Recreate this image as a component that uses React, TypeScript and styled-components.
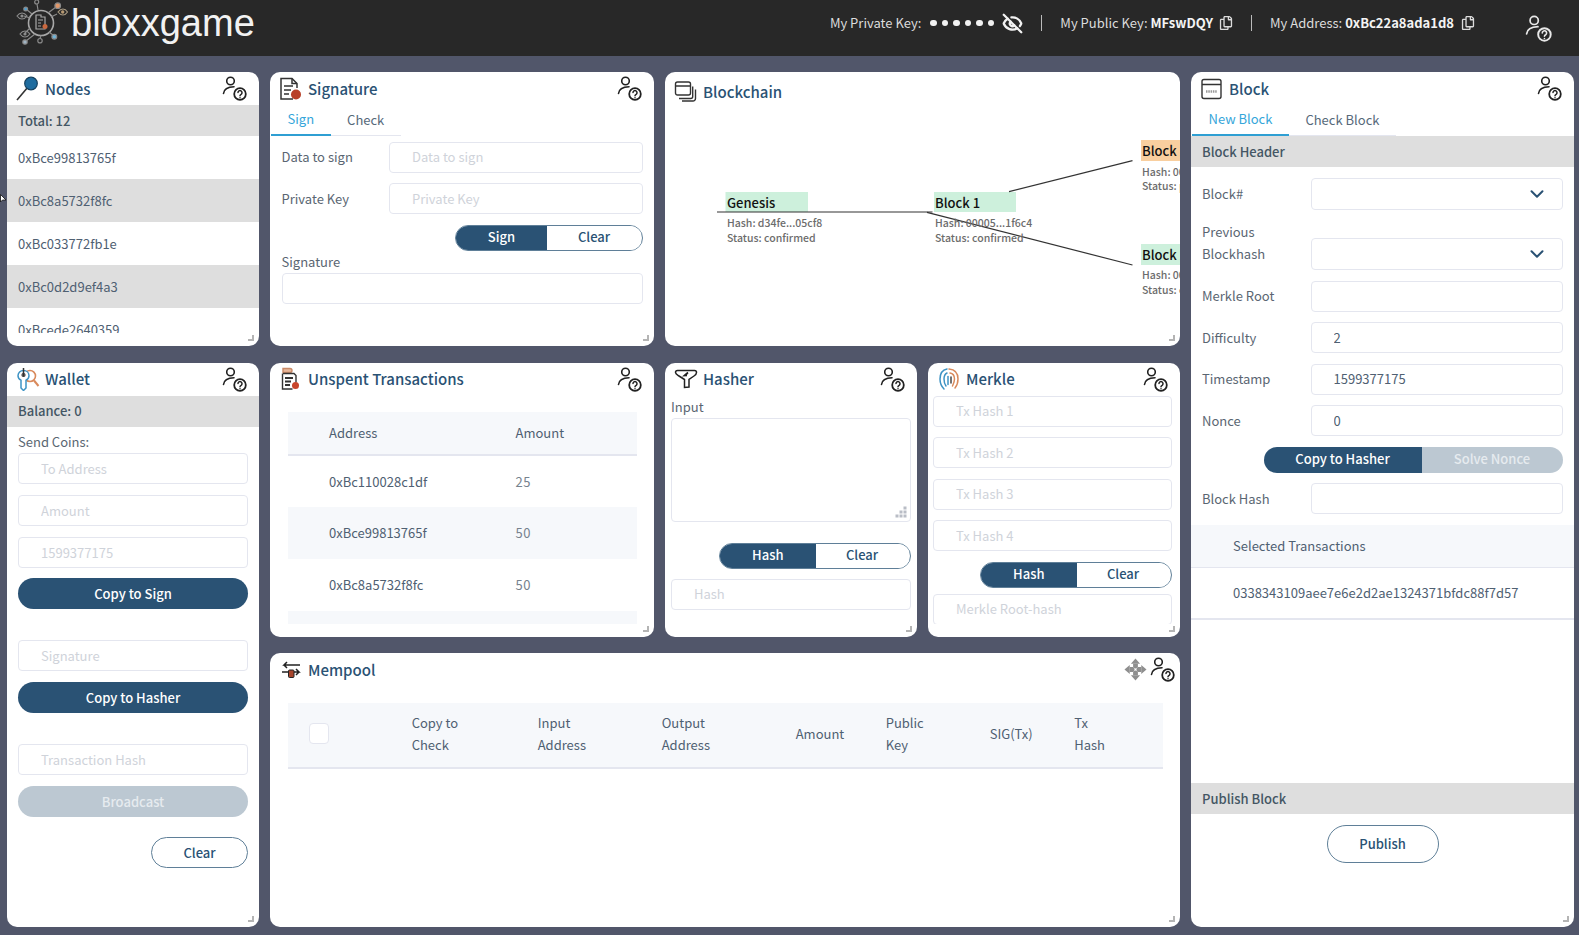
import { ReactNode } from "react";
import styled, { createGlobalStyle } from "styled-components";
import { ChevronDown, EyeOff } from "lucide-react";
import { FaRegCopy } from "react-icons/fa";

const navy = "#2a5274";
const line = "#e4e6ef";
const soft = "#f6f8fb";
const strip = "#dedede";

const GlobalStyle = createGlobalStyle`
  html, body { margin: 0; padding: 0; background: #51566a; }
  body {
    font-family: "Noto Sans CJK SC", "Noto Sans", sans-serif;
    font-size: 13px;
    line-height: 22px;
    color: #5a6672;
  }
  * { box-sizing: border-box; }
  input::placeholder, textarea::placeholder { color: #cfd3da; opacity: 1; }
`;

const Page = styled.div`
  position: relative;
  width: 1579px;
  height: 935px;
  overflow: hidden;
  background: #51566a;
`;

const TopBar = styled.header`
  height: 56px;
  background: #282828;
  display: flex;
  align-items: center;
  padding: 0 27px 0 14px;
`;

const Brand = styled.div`
  display: flex;
  align-items: center;
  gap: 3px;
  margin-top: -10px;
  font-family: "Liberation Sans", Arial, sans-serif;
  font-size: 38px;
  line-height: 46px;
  color: #f2f2f2;
`;

const KeyInfo = styled.div`
  margin-left: auto;
  display: flex;
  align-items: center;
  color: #dcdcdc;
  font-size: 13px;
  margin-top: -10px;
  & > b { font-weight: 700; color: #f4f4f4; margin-left: 3px; }
  & svg { flex: none; }
`;

const Dots = styled.span`
  display: inline-flex;
  gap: 5px;
  margin: 0 8px 0 9px;
  & > i { width: 6.5px; height: 6.5px; border-radius: 50%; background: #f2f2f2; }
`;

const Divider = styled.span`
  width: 1px;
  height: 16px;
  background: #bbb;
  margin: 0 18px;
`;

const Board = styled.main`
  display: grid;
  grid-template-columns: 252px 384px 252px 252px 383px;
  grid-template-rows: repeat(3, 274px);
  column-gap: 11px;
  row-gap: 16.5px;
  padding: 16px 0 0 7px;
`;

const Panel = styled.section<{ $col: string; $row: string }>`
  grid-column: ${(p) => p.$col};
  grid-row: ${(p) => p.$row};
  position: relative;
  display: flex;
  flex-direction: column;
  min-height: 0;
  background: #fff;
  border-radius: 10px;
  overflow: hidden;
`;

const PanelHead = styled.div<{ $height?: number; $right?: number }>`
  flex: none;
  height: ${(p) => p.$height ?? 33}px;
  display: flex;
  align-items: center;
  gap: 5px;
  padding: 0 ${(p) => p.$right ?? 12}px 0 9px;
`;

const Title = styled.h2`
  margin: 0;
  font-size: 15px;
  font-weight: 500;
  color: ${navy};
  white-space: nowrap;
`;

const HeadTools = styled.div`
  margin-left: auto;
  display: flex;
  align-items: center;
  gap: 3px;
`;

const Grip = styled.span`
  position: absolute;
  right: 5px;
  bottom: 5px;
  width: 6px;
  height: 6px;
  border-right: 2px solid #b4b4b4;
  border-bottom: 2px solid #b4b4b4;
`;

const Strip = styled.div`
  flex: none;
  height: 31px;
  padding-left: 11px;
  display: flex;
  align-items: center;
  background: ${strip};
  color: #445664;
  font-weight: 500;
`;

const Tabs = styled.div`
  flex: none;
  display: flex;
  height: 31px;
  width: max-content;
  margin-left: 1px;
`;

const Tab = styled.div<{ $active?: boolean }>`
  padding: 0 16.5px 1px;
  display: flex;
  align-items: center;
  border-bottom: ${(p) => (p.$active ? "2px solid #2f9fd3" : `1px solid ${line}`)};
  color: ${(p) => (p.$active ? "#35a6da" : "#56697a")};
`;

const Field = styled.input<{ $mb?: number }>`
  display: block;
  width: 100%;
  height: 31px;
  flex: none;
  margin: 0 0 ${(p) => p.$mb ?? 0}px;
  padding: 0 22px 1px;
  border: 1px solid ${line};
  border-radius: 4px;
  background: #fff;
  outline: 0;
  font: inherit;
  color: #4f6072;
`;

const Pill = styled.button<{ $ghost?: boolean; $off?: boolean; $width?: number; $mb?: number }>`
  display: block;
  flex: none;
  width: ${(p) => (p.$width ? `${p.$width}px` : "100%")};
  height: 31px;
  margin: 0 0 ${(p) => p.$mb ?? 0}px auto;
  border-radius: 16px;
  border: ${(p) => (p.$ghost ? "1.5px solid #5f7f98" : "0")};
  background: ${(p) => (p.$ghost ? "#fff" : p.$off ? "#bcc8d2" : navy)};
  color: ${(p) => (p.$ghost ? navy : p.$off ? "#e6ebef" : "#fff")};
  font: inherit;
  font-weight: 500;
  padding: 0;
`;

const SplitGroup = styled.div<{ $width: number; $mb?: number; $flat?: boolean }>`
  flex: none;
  display: flex;
  width: ${(p) => p.$width}px;
  height: 26px;
  margin: 0 0 ${(p) => p.$mb ?? 0}px auto;
  border-radius: 13px;
  overflow: hidden;
  border: ${(p) => (p.$flat ? "0" : "1.5px solid #5f7f98")};
  background: #fff;
`;

const SplitButton = styled.button<{ $tone: "solid" | "plain" | "off"; $basis: number }>`
  flex: none;
  width: ${(p) => p.$basis}px;
  border: 0;
  padding: 0 0 1px;
  font: inherit;
  font-weight: 500;
  line-height: 20px;
  background: ${(p) => (p.$tone === "solid" ? navy : p.$tone === "off" ? "#bcc8d2" : "#fff")};
  color: ${(p) => (p.$tone === "solid" ? "#fff" : p.$tone === "off" ? "#e6ebef" : navy)};
`;

const NodeList = styled.ul`
  flex: 1;
  min-height: 0;
  margin: 0 0 13px;
  padding: 0;
  list-style: none;
  overflow: hidden;
`;

const NodeRow = styled.li<{ $shaded?: boolean }>`
  height: 43px;
  padding-left: 11px;
  display: flex;
  align-items: center;
  background: ${(p) => (p.$shaded ? strip : "#fff")};
  color: #4f6072;
`;

const SignBody = styled.div`
  padding: 5.5px 11px 0 11.5px;
  display: flex;
  flex-direction: column;
`;

const SignRow = styled.div`
  display: grid;
  grid-template-columns: 107.5px 1fr;
  align-items: center;
  margin-bottom: 10.5px;
`;

const FieldLabel = styled.label`
  display: block;
  color: #5a6672;
`;

const WalletBody = styled.div`
  padding: 4.5px 11px 0;
  display: flex;
  flex-direction: column;
`;

const TableClip = styled.div<{ $top: number }>`
  flex: 1;
  min-height: 0;
  overflow: hidden;
  margin: ${(p) => p.$top}px 17px 13px 17.5px;
`;

const DataTable = styled.table`
  width: 100%;
  border-collapse: collapse;
  table-layout: fixed;
`;

const HeadCell = styled.th<{ $width?: number; $height: number; $lift?: number }>`
  ${(p) => (p.$width ? `width: ${p.$width}px;` : "")}
  height: ${(p) => p.$height}px;
  padding: 0 0 ${(p) => p.$lift ?? 0}px;
  background: ${soft};
  border-bottom: 2px solid ${line};
  text-align: left;
  font-weight: 400;
  color: #4f6072;
  vertical-align: middle;
`;

const Indent = styled.span<{ $left: number }>`
  display: block;
  padding-left: ${(p) => p.$left}px;
`;

const BodyRow = styled.tr<{ $shaded?: boolean }>`
  height: 52px;
  background: ${(p) => (p.$shaded ? soft : "#fff")};
`;

const BodyCell = styled.td<{ $muted?: boolean }>`
  padding: 0;
  color: ${(p) => (p.$muted ? "#76828e" : "#4f6072")};
  letter-spacing: ${(p) => (p.$muted ? "0.6px" : "0")};
`;

const ToolBody = styled.div<{ $left: number; $right: number }>`
  flex: 1;
  min-height: 0;
  margin-bottom: 13px;
  overflow: hidden;
  padding: 0 ${(p) => p.$right}px 0 ${(p) => p.$left}px;
  display: flex;
  flex-direction: column;
`;

const AreaWrap = styled.div`
  position: relative;
  flex: none;
  height: 104px;
  margin-bottom: 21px;
`;

const Area = styled.textarea`
  display: block;
  width: 100%;
  height: 100%;
  resize: none;
  border: 1px solid ${line};
  border-radius: 4px;
  outline: 0;
  font: inherit;
`;

const AreaGrip = styled.svg`
  position: absolute;
  right: 4px;
  bottom: 4px;
`;

const BlockForm = styled.div`
  flex: none;
  padding: 11px 11.5px 0 11px;
  display: flex;
  flex-direction: column;
  gap: 10.5px;
`;

const BlockRow = styled.div<{ $tall?: boolean }>`
  display: grid;
  grid-template-columns: 108.5px 1fr;
  align-items: ${(p) => (p.$tall ? "end" : "center")};
  ${(p) => (p.$tall ? "height: 49.5px;" : "")}
`;

const TallLabel = styled(FieldLabel)`
  align-self: start;
`;

const SelectBox = styled.div`
  height: 32px;
  border: 1px solid ${line};
  border-radius: 4px;
  display: flex;
  align-items: center;
  justify-content: flex-end;
  padding-right: 14px;
  color: ${navy};
`;

const SelectedHead = styled.div`
  flex: none;
  height: 43.5px;
  margin-top: 10.5px;
  padding-left: 42px;
  display: flex;
  align-items: center;
  background: ${soft};
  border-bottom: 1px solid ${line};
  color: #4f6072;
`;

const SelectedRow = styled.div`
  flex: none;
  height: 52px;
  padding-left: 42px;
  display: flex;
  align-items: center;
  border-bottom: 2px solid ${line};
  color: #4f6072;
`;

const Filler = styled.div`
  flex: 1;
`;

const PublishWrap = styled.div`
  flex: none;
  height: 113px;
  display: flex;
  justify-content: center;
  padding-top: 11px;
`;

const PublishButton = styled.button`
  width: 112px;
  height: 38px;
  border-radius: 19px;
  border: 1.5px solid #5f7f98;
  background: #fff;
  color: ${navy};
  font: inherit;
  font-weight: 500;
  padding: 0;
`;

const CheckMark = styled.span`
  display: block;
  width: 20.5px;
  height: 20.5px;
  margin-left: 21px;
  background: #fff;
  border: 1px solid ${line};
  border-radius: 4px;
`;

const Diagram = styled.svg`
  position: absolute;
  top: 0;
  left: 0;
  font-family: "Noto Sans CJK SC", "Noto Sans", sans-serif;
`;

const BlockName = styled.text`
  font-size: 13px;
  font-weight: 500;
  fill: #111;
`;

const BlockMeta = styled.text`
  font-size: 10.5px;
  font-weight: 500;
  fill: #6c6c6c;
`;

const PointerMark = styled.svg`
  position: absolute;
  left: 0;
  top: 194px;
`;

const TopHelp = styled.span`
  margin-left: 50px;
  display: flex;
  margin-top: 10px;
  & circle, & path { stroke: #e8e8e8; }
`;

function HelpIcon({ size = 25 }: { size?: number }) {
  return (
    <svg width={size} height={size} viewBox="0 0 25 25" fill="none" stroke="#222" strokeWidth="1.6" strokeLinecap="round">
      <circle cx="8.5" cy="5" r="3.8" />
      <path d="M1.5 17.5C2 13 5.5 11 12 10.8" />
      <circle cx="18" cy="18" r="5.8" strokeWidth="1.8" />
      <path d="M16 16.6a2 2 0 1 1 3.100 1.700c-.7.4-1.100.8-1.100 1.400" strokeWidth="1.5" />
      <path d="M18 21.700v.1" strokeWidth="1.5" />
    </svg>
  );
}

function LogoIcon() {
  const spokes = [
    [11.7, 9, 1.9, "#4f9fd0"],
    [22.7, 2, 2, "none"],
    [43.7, 5.7, 2.8, "#e0976a"],
    [11, 42, 2.2, "#9fb4c4"],
    [26, 40.7, 2.2, "none"],
    [40.3, 36.7, 2.4, "#6fb4d8"],
  ] as const;
  return (
    <svg width="54" height="46" viewBox="0 0 54 46" fill="none" stroke="#8a8a8a" strokeWidth="1.2">
      <circle cx="27" cy="23" r="12.5" strokeWidth="1.6" stroke="#a8a8a8" />
      <path d="M18 14L12 9M24 10L23 4M34 13L42 7M37 17L43 14M16 18L10 16M16 28L11 33M21 34L12 41M27 35.5L26 38.5M35 32L39 35" />
      {spokes.map(([x, y, r, fill]) => (
        <circle key={`${x}-${y}`} cx={x} cy={y} r={r} fill={fill} />
      ))}
      <path d="M3 16c3-4 7-4 10 0c-3 4-7 4-10 0z" stroke="#8c8c8c" />
      <circle cx="8" cy="16" r="1.6" fill="#8c8c8c" stroke="none" />
      <path d="M44 12c3-4 7-4 9.500 0c-2.500 4-6.500 4-9.500 0z" stroke="#a89a82" />
      <circle cx="48.700" cy="12" r="1.7" fill="#b89a72" stroke="none" />
      <path d="M6 34c3-4 7-4 10 0c-3 4-7 4-10 0z" stroke="#8c8c8c" />
      <circle cx="11" cy="34" r="1.6" fill="#8c8c8c" stroke="none" />
      <path d="M22 15h5v2h4v12h-9z" stroke="#a8a8a8" />
      <path d="M24 20h5M24 23h3M24 26h3" stroke="#a8a8a8" />
      <circle cx="31" cy="26.500" r="2.500" fill="#c9683f" stroke="none" />
    </svg>
  );
}

function NodesIcon() {
  return (
    <svg width="24" height="25" viewBox="0 0 24 25" fill="none">
      <path d="M1 24L12 11" stroke="#333" strokeWidth="1.6" />
      <circle cx="15" cy="7.500" r="6.300" fill="#1f6c9f" stroke="#16415f" strokeWidth="1.2" />
    </svg>
  );
}

function SignatureIcon() {
  return (
    <svg width="24" height="24" viewBox="0 0 24 24" fill="none" stroke="#333" strokeWidth="1.5">
      <path d="M14 22H2V1.500h11l5 5V11" />
      <path d="M13 1.500V6.500h5M5 9h9M5 13h7M5 17h5" />
      <circle cx="17" cy="17.500" r="5" fill="#b8412a" stroke="none" />
    </svg>
  );
}

function ChainIcon() {
  return (
    <svg width="24" height="24" viewBox="0 0 24 24" fill="none" stroke="#333" strokeWidth="1.400">
      <rect x="1.500" y="2" width="15" height="13" rx="2" />
      <path d="M1.500 6h15" />
      <path d="M18.700 6.500v10a2 2 0 0 1-2 2H5" />
      <path d="M21.500 9.500v9a2.500 2.500 0 0 1-2.500 2.500H8" />
    </svg>
  );
}

function BlockIcon() {
  return (
    <svg width="24" height="24" viewBox="0 0 24 24" fill="none" stroke="#333" strokeWidth="1.400">
      <rect x="2" y="2.500" width="19" height="19" rx="2" />
      <path d="M2 7.500h19" />
      <path d="M6 14.500h11" stroke="#999" strokeWidth="2.500" strokeDasharray="1.500 .8" />
    </svg>
  );
}

function WalletIcon() {
  return (
    <svg width="24" height="24" viewBox="0 0 24 24" fill="none">
      <circle cx="14" cy="9" r="5.500" stroke="#d98a5c" strokeWidth="1.600" />
      <path d="M18 13.500l4.500 5.500" stroke="#d98a5c" strokeWidth="2" />
      <path d="M7.500 3.500c3.200 0 5.500 2.300 5.500 5.200 0 2-1 3.500-3 4.500V21l-2.500 2.500L5 21v-7.800c-2-1-3-2.500-3-4.500 0-2.900 2.300-5.200 5.500-5.200z" fill="#fff" stroke="#3e93c4" strokeWidth="1.500" />
      <path d="M7.500 1v8" stroke="#333" strokeWidth="1.500" />
      <circle cx="7.500" cy="8" r="1.500" stroke="#333" strokeWidth="1.200" />
    </svg>
  );
}

function UnspentIcon() {
  return (
    <svg width="24" height="24" viewBox="0 0 24 24" fill="none" stroke="#333" strokeWidth="1.400">
      <path d="M4 1.500h7a2 2 0 0 1 0 4H4z" fill="#e7b79a" stroke="#c98a68" />
      <path d="M4 6.500h11l2 2v7" />
      <path d="M3.500 6.500V22h10" />
      <path d="M6 11h8M6 14.500h6M6 18h5" strokeWidth="2" />
      <circle cx="16.500" cy="18.500" r="3.500" fill="#c8452c" stroke="none" />
    </svg>
  );
}

function HasherIcon() {
  return (
    <svg width="24" height="24" viewBox="0 0 24 24" fill="none" stroke="#222" strokeWidth="1.500">
      <path d="M1.500 5.500c0-1.300.8-2 2-2h17c1.200 0 2 .7 2 2 0 1.500-1 2.500-2.500 3.500l-5 3.500v7.500l-4.500 .5V12.500L5 9c-1.500-1-3.500-2-3.500-3.500z" />
      <path d="M14 5.500l-3.500 3 2.500-.2" fill="#555" strokeWidth="1.700" />
    </svg>
  );
}

function MerkleIcon() {
  return (
    <svg width="24" height="24" viewBox="0 0 24 24" fill="none" strokeWidth="1.500" strokeLinecap="round">
      <path d="M10 2C5 3 3 7 3 12c0 4 1 7 4 10" stroke="#3e93c4" />
      <path d="M10 6C8 7 7 9 7 12c0 3 .5 5 2 7" stroke="#3e93c4" />
      <path d="M11 9.500v8" stroke="#3e93c4" />
      <path d="M12 2c6 .5 9 4.500 9 10 0 3-.5 6-3 9" stroke="#d98a5c" />
      <path d="M13 6c3 .5 4.500 3 4.500 6 0 3-1 5-2 7" stroke="#d98a5c" />
      <path d="M14 10v6" stroke="#444" />
    </svg>
  );
}

function MempoolIcon() {
  return (
    <svg width="24" height="24" viewBox="0 0 24 24" fill="none" stroke="#222" strokeWidth="1.500">
      <path d="M21 7H5l3-3M5 7l3 3" />
      <path d="M3 14h17l-3-3M20 14l-3 3" />
      <rect x="9.500" y="12" width="5.500" height="7.500" rx="1" fill="#a8452c" stroke="#222" strokeWidth="1" />
    </svg>
  );
}

function MoveIcon() {
  return (
    <svg width="23" height="23" viewBox="0 0 24 24" fill="#8f8f8f">
      <path d="M12 0.500l4.800 5.500H7.200zM12 23.500l-4.800-5.500h9.600zM0.500 12L6 7.200v9.600zM23.500 12L18 16.800V7.200z" />
      <path d="M9.500 6h5v3.500l-2.500 2-2.500-2zM9.500 18h5v-3.500l-2.500-2-2.500 2zM6 9.500v5h3.500l2-2.500-2-2.500zM18 9.500v5h-3.500l-2-2.500 2-2.500z" />
      <circle cx="12" cy="12" r="1" fill="#fff" />
    </svg>
  );
}

function Head({ icon, title, height, right, tools }: { icon: ReactNode; title: string; height?: number; right?: number; tools?: ReactNode }) {
  return (
    <PanelHead $height={height} $right={right}>
      {icon}
      <Title>{title}</Title>
      {tools ?? (
        <HeadTools>
          <HelpIcon />
        </HeadTools>
      )}
    </PanelHead>
  );
}

const nodes = ["0xBce99813765f", "0xBc8a5732f8fc", "0xBc033772fb1e", "0xBc0d2d9ef4a3", "0xBcede2640359"];
const unspent = [
  ["0xBc110028c1df", "25"],
  ["0xBce99813765f", "50"],
  ["0xBc8a5732f8fc", "50"],
  ["", ""],
];
const mempoolColumns: [string, number][] = [
  ["Copy to|Check", 126],
  ["Input|Address", 124],
  ["Output|Address", 134],
  ["Amount", 90],
  ["Public|Key", 104],
  ["SIG(Tx)", 84.5],
  ["Tx|Hash", 0],
];

export default function App() {
  return (
    <Page>
      <GlobalStyle />
      <TopBar>
        <Brand>
          <LogoIcon />
          <span>bloxxgame</span>
        </Brand>
        <KeyInfo>
          <span>My Private Key:</span>
          <Dots>
            <i /><i /><i /><i /><i /><i />
          </Dots>
          <EyeOff size={21} strokeWidth={2.6} color="#f2f2f2" />
          <Divider />
          <span>My Public Key:</span>
          <b>MFswDQY</b>
          <FaRegCopy size={14} style={{ marginLeft: 6 }} />
          <Divider />
          <span>My Address:</span>
          <b>0xBc22a8ada1d8</b>
          <FaRegCopy size={14} style={{ marginLeft: 7 }} />
          <TopHelp>
            <HelpIcon size={27} />
          </TopHelp>
        </KeyInfo>
      </TopBar>

      <Board>
        <Panel $col="1" $row="1">
          <Head icon={<NodesIcon />} title="Nodes" />
          <Strip>Total: 12</Strip>
          <NodeList>
            {nodes.map((n, i) => (
              <NodeRow key={n} $shaded={i % 2 === 1}>{n}</NodeRow>
            ))}
          </NodeList>
          <Grip />
        </Panel>

        <Panel $col="2" $row="1">
          <Head icon={<SignatureIcon />} title="Signature" />
          <Tabs>
            <Tab $active>Sign</Tab>
            <Tab>Check</Tab>
          </Tabs>
          <SignBody>
            <SignRow>
              <FieldLabel>Data to sign</FieldLabel>
              <Field placeholder="Data to sign" />
            </SignRow>
            <SignRow>
              <FieldLabel>Private Key</FieldLabel>
              <Field placeholder="Private Key" />
            </SignRow>
            <SplitGroup $width={188}>
              <SplitButton $tone="solid" $basis={91}>Sign</SplitButton>
              <SplitButton $tone="plain" $basis={94}>Clear</SplitButton>
            </SplitGroup>
            <FieldLabel>Signature</FieldLabel>
            <Field />
          </SignBody>
          <Grip />
        </Panel>

        <Panel $col="3 / 5" $row="1">
          <Head
            icon={<ChainIcon />}
            title="Blockchain"
            height={40}
            tools={<span />}
          />
          <Diagram width="515" height="274" viewBox="0 0 515 274">
            <rect x="60.500" y="120" width="82.500" height="20" fill="#cdf0dc" />
            <rect x="269" y="120" width="82" height="20" fill="#cdf0dc" />
            <rect x="476" y="68" width="39" height="21" fill="#f9cf9f" />
            <rect x="476" y="172" width="39" height="21" fill="#cdf0dc" />
            <g stroke="#333" strokeWidth="1.200">
              <path d="M52 140H267.500" />
              <path d="M344 119.700L467.500 88.700" />
              <path d="M262 140.300L467.500 193" />
            </g>
            <BlockName x="62" y="135.500">Genesis</BlockName>
            <BlockMeta x="62" y="155">Hash: d34fe...05cf8</BlockMeta>
            <BlockMeta x="62" y="169.500">Status: confirmed</BlockMeta>
            <BlockName x="270" y="135.500">Block 1</BlockName>
            <BlockMeta x="270" y="155">Hash: 00005...1f6c4</BlockMeta>
            <BlockMeta x="270" y="169.500">Status: confirmed</BlockMeta>
            <BlockName x="477" y="84">Block 2</BlockName>
            <BlockMeta x="477" y="103.500">Hash: 00a31...7bc02</BlockMeta>
            <BlockMeta x="477" y="118">Status: pending</BlockMeta>
            <BlockName x="477" y="188">Block 2</BlockName>
            <BlockMeta x="477" y="207">Hash: 00f27...91de6</BlockMeta>
            <BlockMeta x="477" y="221.500">Status: confirmed</BlockMeta>
          </Diagram>
          <Grip />
        </Panel>

        <Panel $col="5" $row="1 / 4">
          <Head icon={<BlockIcon />} title="Block" />
          <Tabs>
            <Tab $active>New Block</Tab>
            <Tab>Check Block</Tab>
          </Tabs>
          <Strip>Block Header</Strip>
          <BlockForm>
            <BlockRow>
              <FieldLabel>Block#</FieldLabel>
              <SelectBox><ChevronDown size={22} strokeWidth={2.2} /></SelectBox>
            </BlockRow>
            <BlockRow $tall>
              <TallLabel>Previous<br />Blockhash</TallLabel>
              <SelectBox><ChevronDown size={22} strokeWidth={2.2} /></SelectBox>
            </BlockRow>
            <BlockRow>
              <FieldLabel>Merkle Root</FieldLabel>
              <Field />
            </BlockRow>
            <BlockRow>
              <FieldLabel>Difficulty</FieldLabel>
              <Field defaultValue="2" />
            </BlockRow>
            <BlockRow>
              <FieldLabel>Timestamp</FieldLabel>
              <Field defaultValue="1599377175" />
            </BlockRow>
            <BlockRow>
              <FieldLabel>Nonce</FieldLabel>
              <Field defaultValue="0" />
            </BlockRow>
            <SplitGroup $width={299} $flat>
              <SplitButton $tone="solid" $basis={158}>Copy to Hasher</SplitButton>
              <SplitButton $tone="off" $basis={141}>Solve Nonce</SplitButton>
            </SplitGroup>
            <BlockRow>
              <FieldLabel>Block Hash</FieldLabel>
              <Field />
            </BlockRow>
          </BlockForm>
          <SelectedHead>Selected Transactions</SelectedHead>
          <SelectedRow>0338343109aee7e6e2d2ae1324371bfdc88f7d57</SelectedRow>
          <Filler />
          <Strip>Publish Block</Strip>
          <PublishWrap>
            <PublishButton>Publish</PublishButton>
          </PublishWrap>
          <Grip />
        </Panel>

        <Panel $col="1" $row="2 / 4">
          <Head icon={<WalletIcon />} title="Wallet" />
          <Strip>Balance: 0</Strip>
          <WalletBody>
            <FieldLabel>Send Coins:</FieldLabel>
            <Field $mb={11} placeholder="To Address" />
            <Field $mb={11} placeholder="Amount" />
            <Field $mb={10} placeholder="1599377175" />
            <Pill $mb={31}>Copy to Sign</Pill>
            <Field $mb={11} placeholder="Signature" />
            <Pill $mb={31}>Copy to Hasher</Pill>
            <Field $mb={11} placeholder="Transaction Hash" />
            <Pill $off $mb={20}>Broadcast</Pill>
            <Pill $ghost $width={97}>Clear</Pill>
          </WalletBody>
          <Grip />
        </Panel>

        <Panel $col="2" $row="2">
          <Head icon={<UnspentIcon />} title="Unspent Transactions" />
          <TableClip $top={16.500}>
            <DataTable>
              <thead>
                <tr>
                  <HeadCell $width={228} $height={43}><Indent $left={41.500}>Address</Indent></HeadCell>
                  <HeadCell $height={43}>Amount</HeadCell>
                </tr>
              </thead>
              <tbody>
                {unspent.map(([address, amount], i) => (
                  <BodyRow key={i} $shaded={i % 2 === 1}>
                    <BodyCell><Indent $left={41.500}>{address}</Indent></BodyCell>
                    <BodyCell $muted>{amount}</BodyCell>
                  </BodyRow>
                ))}
              </tbody>
            </DataTable>
          </TableClip>
          <Grip />
        </Panel>

        <Panel $col="3" $row="2">
          <Head icon={<HasherIcon />} title="Hasher" />
          <ToolBody $left={6} $right={6.500}>
            <FieldLabel>Input</FieldLabel>
            <AreaWrap>
              <Area />
              <AreaGrip width="12" height="12" viewBox="0 0 12 12" fill="#b9bdc6">
                <rect x="8.500" y="0.500" width="3" height="3" />
                <rect x="4.500" y="4.500" width="3" height="3" />
                <rect x="8.500" y="4.500" width="3" height="3" />
                <rect x="0.500" y="8.500" width="3" height="3" />
                <rect x="4.500" y="8.500" width="3" height="3" />
                <rect x="8.500" y="8.500" width="3" height="3" />
              </AreaGrip>
            </AreaWrap>
            <SplitGroup $width={191.500} $mb={10}>
              <SplitButton $tone="solid" $basis={95.500}>Hash</SplitButton>
              <SplitButton $tone="plain" $basis={93}>Clear</SplitButton>
            </SplitGroup>
            <Field placeholder="Hash" />
          </ToolBody>
          <Grip />
        </Panel>

        <Panel $col="4" $row="2">
          <Head icon={<MerkleIcon />} title="Merkle" />
          <ToolBody $left={5} $right={8.500}>
            <Field $mb={10.500} placeholder="Tx Hash 1" />
            <Field $mb={10.500} placeholder="Tx Hash 2" />
            <Field $mb={10.500} placeholder="Tx Hash 3" />
            <Field $mb={10.500} placeholder="Tx Hash 4" />
            <SplitGroup $width={191.500} $mb={6}>
              <SplitButton $tone="solid" $basis={95.500}>Hash</SplitButton>
              <SplitButton $tone="plain" $basis={93}>Clear</SplitButton>
            </SplitGroup>
            <Field placeholder="Merkle Root-hash" />
          </ToolBody>
          <Grip />
        </Panel>

        <Panel $col="2 / 5" $row="3">
          <Head
            icon={<MempoolIcon />}
            title="Mempool"
            right={5}
            tools={
              <HeadTools>
                <MoveIcon />
                <HelpIcon />
              </HeadTools>
            }
          />
          <TableClip $top={16.500}>
            <DataTable>
              <thead>
                <tr>
                  <HeadCell $width={124.200} $height={65} $lift={2}><CheckMark /></HeadCell>
                  {mempoolColumns.map(([label, width]) => (
                    <HeadCell key={label} $width={width || undefined} $height={65} $lift={2}>
                      {label.split("|").map((part) => (
                        <div key={part}>{part}</div>
                      ))}
                    </HeadCell>
                  ))}
                </tr>
              </thead>
            </DataTable>
          </TableClip>
          <Grip />
        </Panel>
      </Board>

      <PointerMark width="7" height="10" viewBox="0 0 7 10">
        <path d="M0.500 0.500L0.500 8L2.500 6H6z" fill="#fff" stroke="#111" strokeWidth="0.800" />
      </PointerMark>
    </Page>
  );
}
